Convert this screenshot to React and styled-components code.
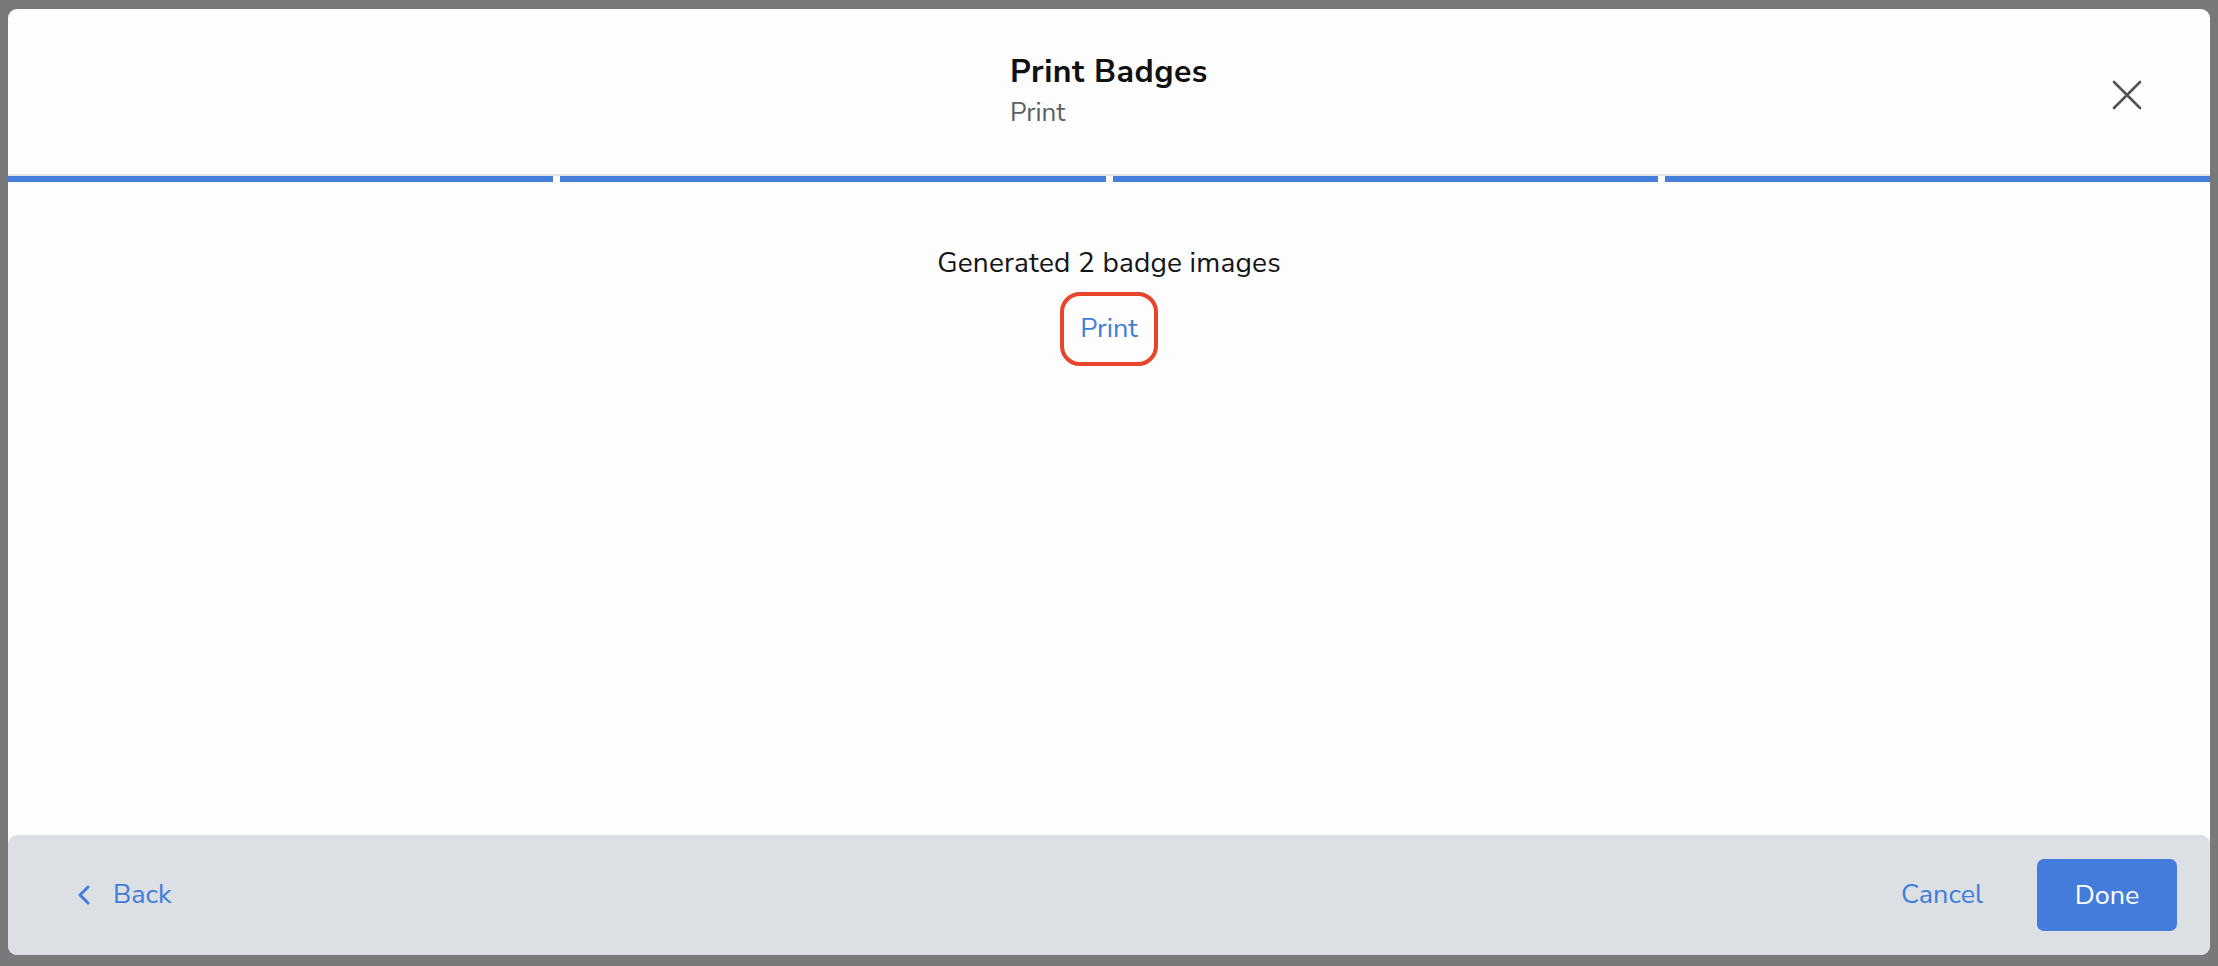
import React from 'react'
import styled, { createGlobalStyle } from 'styled-components';

const GlobalStyle = createGlobalStyle`
    html, body {
        margin: 0;
        padding: 0;
        background: #78797b;
    }
    body {
        font-family: "Nunito Sans", Lato, "Noto Sans", sans-serif;
    }
`;

const steps = [1, 2, 3, 4];

function App() {
  return (
    <Backdrop>
        <GlobalStyle />
        <Modal>
            <Header>
                <span />
                <TitleBlock>
                    <Title>Print Badges</Title>
                    <Subtitle>Print</Subtitle>
                </TitleBlock>
                <CloseButton aria-label="Close">
                    <svg width="30" height="30" viewBox="0 0 30 30" fill="none" stroke="#505254" strokeWidth="2.6" strokeLinecap="round">
                        <path d="M2 2 L28 28 M28 2 L2 28" />
                    </svg>
                </CloseButton>
            </Header>
            <Progress>
                {steps.map(s => <Step key={s} done />)}
            </Progress>
            <Body>
                <Message>Generated 2 badge images</Message>
                <PrintLink href="#">Print</PrintLink>
            </Body>
            <Footer>
                <LinkButton>
                    <svg width="14" height="20" viewBox="0 0 14 20" fill="none" stroke="#3f7ddb" strokeWidth="3" strokeLinecap="round" strokeLinejoin="round">
                        <path d="M11 2 L3 10 L11 18" />
                    </svg>
                    Back
                </LinkButton>
                <Actions>
                    <LinkButton>Cancel</LinkButton>
                    <PrimaryButton>Done</PrimaryButton>
                </Actions>
            </Footer>
        </Modal>
    </Backdrop>
  )
}

const Backdrop = styled.div`
    height: 966px;
    box-sizing: border-box;
    padding: 9px 8px 11px 8px;
    background: #78797b;
`;

const Modal = styled.div`
    height: 946px;
    background: #fdfdfe;
    border-radius: 9px;
    display: flex;
    flex-direction: column;
    overflow: hidden;
`;

const Header = styled.header`
    display: grid;
    grid-template-columns: 1fr auto 1fr;
    align-items: center;
    padding: 44px 0 43px;
    border-bottom: 2px solid #e1e4e8;
`;

const TitleBlock = styled.div`
    display: flex;
    flex-direction: column;
    text-align: left;
`;

const Title = styled.h1`
    margin: 0;
    font-size: 32px;
    line-height: 38px;
    font-weight: 700;
    letter-spacing: 0.5px;
    color: #111;
`;

const Subtitle = styled.div`
    margin-top: 4px;
    font-size: 26px;
    line-height: 36px;
    color: #5c5f63;
`;

const CloseButton = styled.button`
    justify-self: end;
    margin: 6px 68px 0 0;
    padding: 0;
    border: none;
    background: none;
    display: flex;
    cursor: pointer;
`;

const Progress = styled.div`
    display: flex;
    gap: 7px;
    background: #fdfdfe;
`;

const Step = styled.div`
    flex: 1;
    height: 6px;
    background: ${p => (p.done ? '#457fdb' : '#e1e4e8')};
`;

const Body = styled.main`
    flex: 1;
    display: flex;
    flex-direction: column;
    align-items: center;
    padding-top: 63px;
`;

const Message = styled.p`
    margin: 0;
    font-size: 28px;
    line-height: 36px;
    letter-spacing: 0.2px;
    color: #151515;
`;

const PrintLink = styled.a`
    margin-top: 11px;
    padding: 15px 16px;
    font-size: 27px;
    line-height: 36px;
    color: #3f7ddb;
    text-decoration: none;
    border: 4px solid #e8432b;
    border-radius: 20px;
`;

const Footer = styled.footer`
    height: 120px;
    flex-shrink: 0;
    display: flex;
    align-items: center;
    justify-content: space-between;
    padding: 0 33px 0 69px;
    background: #dcdfe3;
    border-radius: 9px 9px 0 0;
`;

const Actions = styled.div`
    display: flex;
    align-items: center;
    gap: 54px;
`;

const LinkButton = styled.button`
    display: flex;
    align-items: center;
    gap: 22px;
    padding: 0;
    border: none;
    background: none;
    font-family: inherit;
    font-size: 27px;
    line-height: 36px;
    color: #3f7ddb;
    cursor: pointer;
`;

const PrimaryButton = styled.button`
    width: 140px;
    height: 72px;
    border: none;
    border-radius: 7px;
    background: #437cdb;
    color: #fff;
    font-family: inherit;
    font-size: 27px;
    cursor: pointer;
`;

export default App;
